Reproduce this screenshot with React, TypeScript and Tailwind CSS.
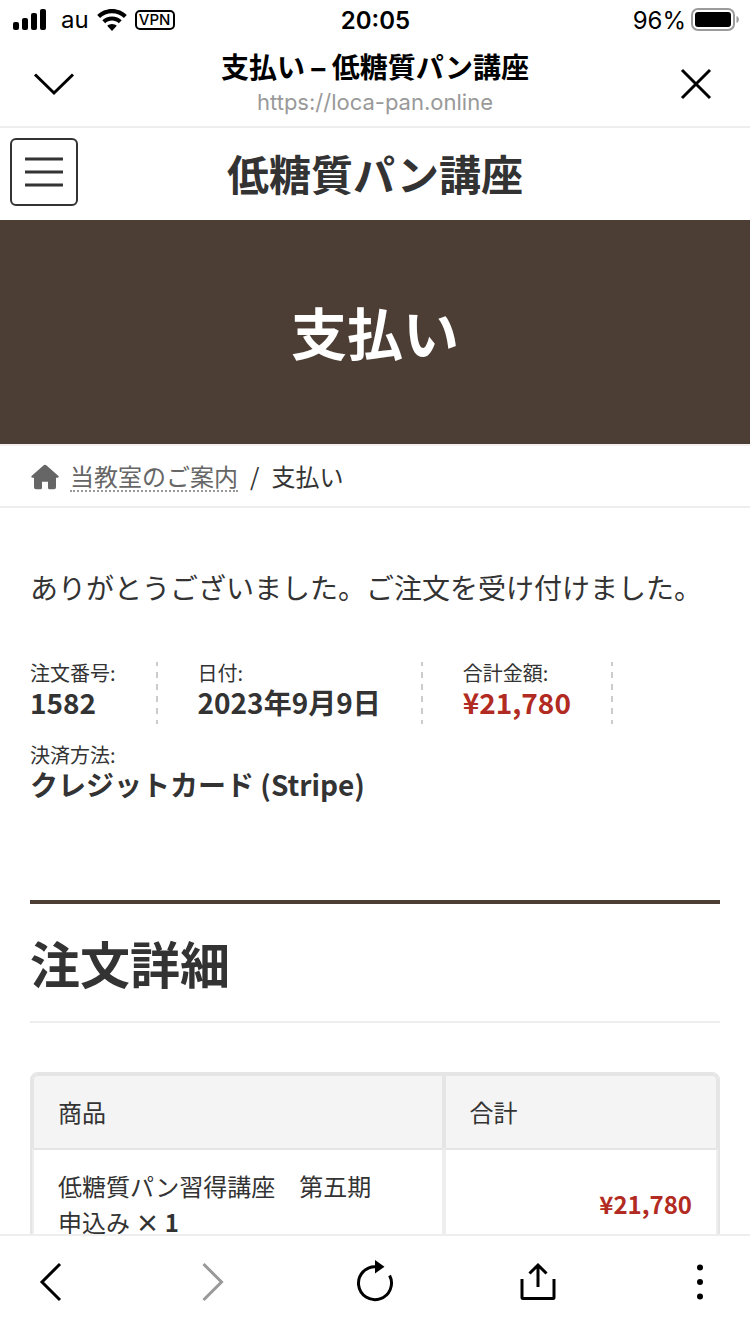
import React from 'react';

type OverviewItem = {
  label: string;
  value: string;
  isPrice?: boolean;
};

const overview: OverviewItem[] = [
  { label: '注文番号:', value: '1582' },
  { label: '日付:', value: '2023年9月9日' },
  { label: '合計金額:', value: '¥21,780', isPrice: true },
  { label: '決済方法:', value: 'クレジットカード (Stripe)' },
];

function StatusBar() {
  return (
    <div className="grid grid-cols-3 items-center h-10 pl-3 pr-[11px] text-2xl leading-8 font-['Inter','Noto_Sans_CJK_JP',sans-serif]">
      <div className="flex items-center">
        <svg className="w-[34px] h-[22px]" viewBox="0 0 34 22" fill="currentColor" aria-label="電波強度">
          <rect x="1" y="13" width="6" height="8" rx="2" />
          <rect x="10" y="9" width="6" height="12" rx="2" />
          <rect x="19" y="4" width="6" height="17" rx="2" />
          <rect x="28" y="0" width="6" height="21" rx="2" />
        </svg>
        <span className="ml-[15px]">au</span>
        <svg className="w-[30px] h-[22px] ml-2" viewBox="0 0 30 22" fill="currentColor" aria-label="Wi-Fi">
          <path d="M15 0C20.8 0 26 2.3 29.8 6L26.9 9C23.9 6 19.6 4.3 15 4.3S6.1 6 3.1 9L.2 6C4 2.3 9.200 0 15 0Z" />
          <path d="M15 7.500C18.8 7.500 22.200 9 24.700 11.300L21.800 14.200C20 12.600 17.600 11.600 15 11.600S10 12.600 8.200 14.200L5.300 11.300C7.800 9 11.200 7.500 15 7.500Z" />
          <path d="M15 15C16.900 15 18.500 15.700 19.800 16.800L15 22L10.200 16.800C11.500 15.700 13.100 15 15 15Z" />
        </svg>
        <span className="flex items-center justify-center w-10 h-5 ml-2 border-2 border-black rounded-[5px] text-[15px] leading-4 font-medium">
          VPN
        </span>
      </div>
      <span className="pt-px text-center font-semibold">20:05</span>
      <div className="flex items-center justify-end gap-1">
        <span className="pt-px">96%</span>
        <svg className="w-[49px] h-[24px]" viewBox="0 0 49 24" aria-label="バッテリー">
          <rect x="2" y="1" width="42" height="21" rx="6" fill="none" stroke="#9b9b9b" strokeWidth="2" />
          <rect x="5" y="4" width="36" height="15" rx="3" fill="#000" />
          <path d="M46.500 8V15C48 14.500 48.800 13.200 48.800 11.500S48 8.500 46.500 8Z" fill="#9b9b9b" />
        </svg>
      </div>
    </div>
  );
}

function BrowserHeader() {
  return (
    <header className="flex items-center justify-between h-[88px] px-8 border-b-2 border-[#eeeeee]">
      <button type="button" aria-label="閉じて戻る" className="w-11 h-11">
        <svg className="w-11 h-11" viewBox="0 0 44 44" fill="none" stroke="currentColor" strokeWidth="3">
          <path d="M3 13.500L22 32L41 13.500" />
        </svg>
      </button>
      <div className="text-center">
        <p className="text-[28px] leading-9 font-bold">
          支払い <span className="font-['Inter',sans-serif]">–</span> 低糖質パン講座
        </p>
        <p className="text-[22px] leading-8 text-[#999999] font-['Inter',sans-serif]">https://loca-pan.online</p>
      </div>
      <button type="button" aria-label="閉じる" className="w-11 h-11">
        <svg className="w-11 h-11" viewBox="0 0 44 44" fill="none" stroke="currentColor" strokeWidth="3">
          <path d="M8 9L36 37M36 9L8 37" />
        </svg>
      </button>
    </header>
  );
}

function SiteHeader() {
  return (
    <div className="grid grid-cols-[68px_1fr_68px] items-start h-[92px] px-[10px] pt-[10px]">
      <button
        type="button"
        aria-label="メニュー"
        className="flex items-center justify-center w-[68px] h-[68px] border-2 border-[#333333] rounded-md"
      >
        <svg className="w-10 h-8" viewBox="0 0 40 32" fill="none" stroke="currentColor" strokeWidth="3">
          <path d="M1 3H39M1 16H39M1 29H39" />
        </svg>
      </button>
      <p className="text-center text-[42px] leading-[70px] font-bold">低糖質パン講座</p>
    </div>
  );
}

function Breadcrumb() {
  return (
    <nav
      aria-label="パンくずリスト"
      className="flex items-center h-16 px-[30px] text-2xl border-t-2 border-b-2 border-t-[#f5f1f0] border-b-[#eeeeee]"
    >
      <a href="#" className="flex items-center gap-[10px] pt-0.5 text-[#666666]">
        <svg className="w-[30px] h-[26px]" viewBox="0 0 30 26" fill="currentColor" aria-hidden="true">
          <path d="M13.700 1.200a2 2 0 0 1 2.600 0L28.200 11.700c.900.900.500 2-.700 2H26v9.500a2 2 0 0 1-2 2h-4.500a1.500 1.500 0 0 1-1.500-1.500v-6h-6v6a1.500 1.500 0 0 1-1.500 1.500H6a2 2 0 0 1-2-2V13.700H2.500c-1.200 0-1.600-1.100-.700-2Z" />
        </svg>
        <span className="leading-7 border-b-2 border-dotted border-[#999999]">当教室のご案内</span>
      </a>
      <span className="mx-3">/</span>
      <span>支払い</span>
    </nav>
  );
}

function OrderOverview() {
  return (
    <ul className="flex flex-wrap gap-x-10 gap-y-5 mt-[54px]">
      {overview.map((item) => (
        <li
          key={item.label}
          className="pr-[42px] pb-1 bg-[linear-gradient(#cccccc_4px,transparent_4px,transparent_10px,#cccccc_10px)] bg-[length:2px_12px] bg-right-top bg-repeat-y last:pr-0 last:bg-none"
        >
          <span className="block text-xl leading-[22px]">{item.label}</span>
          <strong className={`block text-[28px] leading-9 font-bold ${item.isPrice ? 'text-[#b22b22]' : ''}`}>
            {item.value}
          </strong>
        </li>
      ))}
    </ul>
  );
}

function OrderDetails() {
  return (
    <section className="mt-[94px]">
      <h2 className="pt-[22px] pb-[22px] text-[50px] leading-[73px] font-bold border-t-4 border-b-2 border-t-[#4c3e35] border-b-[#eeeeee]">
        注文詳細
      </h2>
      <table className="w-full mt-[49px] text-2xl leading-9 border-separate border-spacing-0 border-2 border-[#e5e5e5] rounded-lg">
        <thead>
          <tr className="bg-[#f4f4f4] text-left">
            <th className="w-3/5 px-6 py-[18px] font-normal border-2 border-b-0 border-[#e5e5e5] rounded-tl-md">商品</th>
            <th className="w-2/5 px-6 py-[18px] font-normal border-2 border-b-0 border-[#e5e5e5] rounded-tr-md">合計</th>
          </tr>
        </thead>
        <tbody>
          <tr>
            <td className="px-6 py-[18px] border-2 border-[#eeeeee] border-t-[#e5e5e5]">
              低糖質パン習得講座　第五期
              <br />
              申込み <strong className="font-bold">× 1</strong>
            </td>
            <td className="px-6 py-[18px] text-right font-bold text-[#b22b22] border-2 border-[#eeeeee] border-t-[#e5e5e5]">
              ¥21,780
            </td>
          </tr>
        </tbody>
      </table>
    </section>
  );
}

function Toolbar() {
  return (
    <footer className="flex shrink-0 justify-between h-[100px] pt-6 px-[26px] border-t-2 border-[#eeeeee] bg-white">
      <button type="button" aria-label="戻る" className="w-12 h-12">
        <svg className="w-12 h-12" viewBox="0 0 48 48" fill="none" stroke="currentColor" strokeWidth="3">
          <path d="M34 4L16 22L34 40" />
        </svg>
      </button>
      <button type="button" aria-label="進む" className="w-12 h-12 text-[#999999]" disabled>
        <svg className="w-12 h-12" viewBox="0 0 48 48" fill="none" stroke="currentColor" strokeWidth="3">
          <path d="M14.500 4L32.500 22L14.500 40" />
        </svg>
      </button>
      <button type="button" aria-label="再読み込み" className="w-12 h-12">
        <svg className="w-12 h-12" viewBox="0 0 48 48" fill="none" stroke="currentColor" strokeWidth="3">
          <path d="M25 6.700A16.500 16.500 0 1 0 38.600 15.500" />
          <path d="M24 0L33.500 6.700L24 13.500Z" fill="currentColor" stroke="none" />
        </svg>
      </button>
      <button type="button" aria-label="共有" className="w-12 h-12">
        <svg className="w-12 h-12" viewBox="0 0 48 48" fill="none" stroke="currentColor" strokeWidth="3">
          <path d="M8 19V37.500a1 1 0 0 0 1 1H39a1 1 0 0 0 1-1V19" />
          <path d="M24 27V5M15.500 13.500L24 5L32.500 13.500" />
        </svg>
      </button>
      <button type="button" aria-label="その他" className="w-12 h-12">
        <svg className="w-12 h-12" viewBox="0 0 48 48" fill="currentColor">
          <circle cx="24" cy="7.500" r="3" />
          <circle cx="24" cy="22" r="3" />
          <circle cx="24" cy="36.500" r="3" />
        </svg>
      </button>
    </footer>
  );
}

export default function App() {
  return (
    <div className="flex flex-col h-screen bg-white text-black font-['Noto_Sans_CJK_JP',sans-serif]">
      <StatusBar />
      <BrowserHeader />

      {/* Page content */}
      <main className="flex-1 min-h-0 overflow-y-auto [scrollbar-width:none] text-[#333333]">
        <SiteHeader />
        <div className="flex items-center justify-center h-56 pb-0.5 bg-[#4c3e35]">
          <h1 className="text-[56px] leading-[80px] font-bold text-white">支払い</h1>
        </div>
        <Breadcrumb />
        <div className="px-[30px] pt-[58px]">
          <p className="text-[28px] leading-[42px]">ありがとうございました。ご注文を受け付けました。</p>
          <OrderOverview />
          <OrderDetails />
        </div>
      </main>

      <Toolbar />
    </div>
  );
}
